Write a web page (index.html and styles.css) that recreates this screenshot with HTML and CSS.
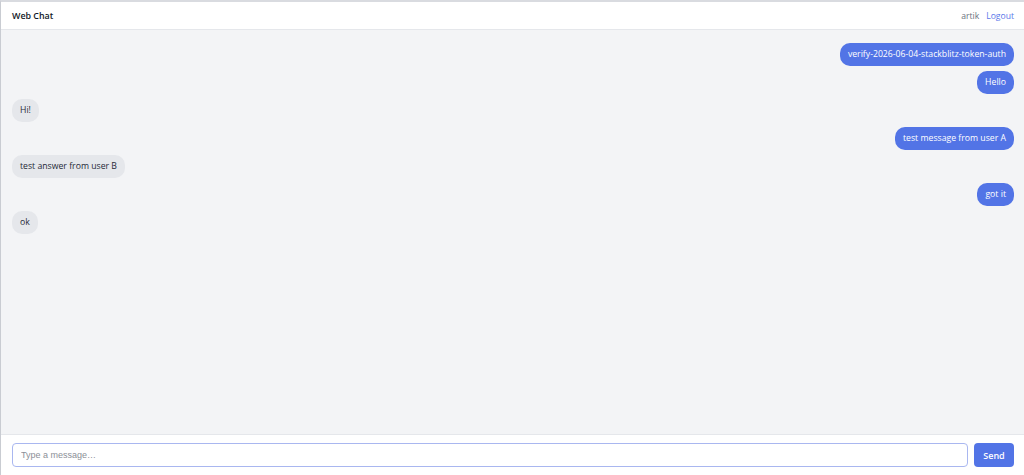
FILE: index.html
```html
<!DOCTYPE html>
<html lang="en">
<head>
  <meta charset="UTF-8">
  <meta name="viewport" content="width=device-width, initial-scale=1.0">
  <title>Web Chat</title>
  <link rel="stylesheet" href="styles.css">
</head>
<body>
  <div class="app">
    <header class="topbar">
      <span class="brand">Web Chat</span>
      <div class="user">
        <span class="username">artik</span>
        <a class="logout" href="#">Logout</a>
      </div>
    </header>

    <main class="messages" id="messages">
      <div class="msg mine">verify-2026-06-04-stackblitz-token-auth</div>
      <div class="msg mine">Hello</div>
      <div class="msg theirs">Hi!</div>
      <div class="msg mine">test message from user A</div>
      <div class="msg theirs">test answer from user B</div>
      <div class="msg mine">got it</div>
      <div class="msg theirs">ok</div>
    </main>

    <form class="composer" id="composer">
      <input type="text" id="text" placeholder="Type a message…" autofocus>
      <button type="submit">Send</button>
    </form>
  </div>
</body>
</html>
```

FILE: styles.css
```css
html, body {
  height: 100%;
}
body {
  margin: 0;
  font-family: "Open Sans", "Noto Sans", Arial, sans-serif;
  color: #1f2937;
}
.app {
  height: 100%;
  box-sizing: border-box;
  display: flex;
  flex-direction: column;
  border-top: 2px solid #d9dbe0;
  border-left: 1px solid #c9ccd2;
}
.topbar {
  height: 27px;
  flex: none;
  display: flex;
  align-items: center;
  justify-content: space-between;
  padding: 0 10px 0 11px;
  background: #fff;
  border-bottom: 1px solid #e5e7eb;
}
.brand {
  font-size: 8.9px;
  font-weight: 600;
  color: #111827;
}
.user {
  display: flex;
  gap: 7px;
  font-size: 8.6px;
}
.username {
  color: #6b7280;
}
.logout {
  color: #5b78ea;
  text-decoration: none;
}
.messages {
  flex: 1;
  background: #f3f4f6;
  padding: 13px 10px 12px 11px;
  display: flex;
  flex-direction: column;
  gap: 5px;
  overflow-y: auto;
}
.msg {
  max-width: 70%;
  padding: 0 8px;
  height: 23px;
  line-height: 23px;
  border-radius: 10px;
  font-size: 8.7px;
  box-sizing: border-box;
}
.mine {
  align-self: flex-end;
  background: #5274e6;
  color: #fff;
}
.theirs {
  align-self: flex-start;
  background: #e5e7eb;
  color: #1f2937;
}
.composer {
  flex: none;
  display: flex;
  gap: 6px;
  padding: 8px 10px 8px 11px;
  background: #fff;
  border-top: 1px solid #e5e7eb;
}
.composer input {
  flex: 1;
  height: 24px;
  box-sizing: border-box;
  padding: 0 8px;
  border: 1px solid #a9b7f0;
  border-radius: 4px;
  font-family: "Liberation Sans", Arial, sans-serif;
  font-size: 9px;
  outline: none;
}
.composer input::placeholder {
  color: #8b8f97;
}
.composer button {
  width: 40px;
  height: 24px;
  border: none;
  border-radius: 4px;
  background: #5274e6;
  color: #fff;
  font-family: "Open Sans", Arial, sans-serif;
  font-size: 9px;
  font-weight: 600;
  cursor: pointer;
}
```
